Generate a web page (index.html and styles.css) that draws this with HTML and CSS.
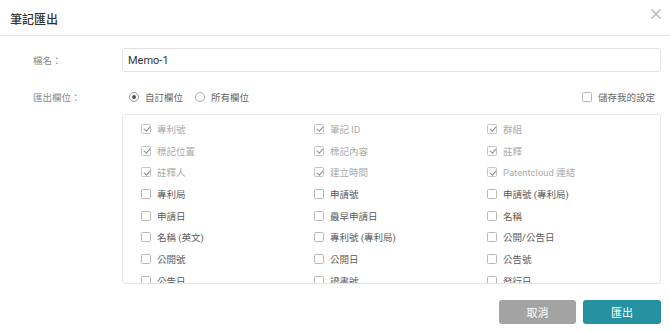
FILE: index.html
```html
<!DOCTYPE html>
<html>
<head>
    <meta charset="UTF-8">
    <title>筆記匯出</title>
    <link rel="stylesheet" href="styles.css">
</head>
<body>
    <div class="modal">
        <div class="modal-header">
            <h4 class="modal-title">筆記匯出</h4>
            <button class="close-btn" type="button">
                <svg viewBox="0 0 10 10" fill="none" stroke="currentColor" stroke-width="1.4">
                    <path d="M0.5 0.5 L9.5 9.5 M9.5 0.5 L0.5 9.5"/>
                </svg>
            </button>
        </div>

        <div class="modal-body">
            <div class="form-row row-name">
                <label class="form-label">檔名：</label>
                <input class="form-input" type="text" value="Memo-1">
            </div>

            <div class="form-row row-fields">
                <label class="form-label">匯出欄位：</label>
                <div class="field-options">
                    <span class="radio-opt"><span class="radio checked"></span>自訂欄位</span>
                    <span class="radio-opt"><span class="radio"></span>所有欄位</span>
                    <span class="save-opt"><span class="check"></span>儲存我的設定</span>
                </div>
            </div>

            <div class="form-row row-list">
                <span class="form-label"></span>
                <div class="field-list">
                    <div class="field-grid">
                        <span class="item disabled"><span class="check on"></span>專利號</span>
                        <span class="item disabled"><span class="check on"></span>筆記 ID</span>
                        <span class="item disabled"><span class="check on"></span>群組</span>

                        <span class="item disabled"><span class="check on"></span>標記位置</span>
                        <span class="item disabled"><span class="check on"></span>標記內容</span>
                        <span class="item disabled"><span class="check on"></span>註釋</span>

                        <span class="item disabled"><span class="check on"></span>註釋人</span>
                        <span class="item disabled"><span class="check on"></span>建立時間</span>
                        <span class="item disabled"><span class="check on"></span>Patentcloud 連結</span>

                        <span class="item"><span class="check"></span>專利局</span>
                        <span class="item"><span class="check"></span>申請號</span>
                        <span class="item"><span class="check"></span>申請號 (專利局)</span>

                        <span class="item"><span class="check"></span>申請日</span>
                        <span class="item"><span class="check"></span>最早申請日</span>
                        <span class="item"><span class="check"></span>名稱</span>

                        <span class="item"><span class="check"></span>名稱 (英文)</span>
                        <span class="item"><span class="check"></span>專利號 (專利局)</span>
                        <span class="item"><span class="check"></span>公開/公告日</span>

                        <span class="item"><span class="check"></span>公開號</span>
                        <span class="item"><span class="check"></span>公開日</span>
                        <span class="item"><span class="check"></span>公告號</span>

                        <span class="item"><span class="check"></span>公告日</span>
                        <span class="item"><span class="check"></span>證書號</span>
                        <span class="item"><span class="check"></span>發行日</span>
                    </div>
                    <div class="scrollbar">
                        <span class="arrow up"></span>
                        <span class="thumb"></span>
                        <span class="arrow down"></span>
                    </div>
                </div>
            </div>
        </div>

        <div class="modal-footer">
            <button class="btn btn-cancel" type="button">取消</button>
            <button class="btn btn-primary" type="button">匯出</button>
        </div>
    </div>
</body>
</html>
```

FILE: styles.css
```css
* {
    margin: 0;
    padding: 0;
    box-sizing: border-box;
}

body {
    width: 670px;
    height: 332px;
    overflow: hidden;
    background: #fff;
    font-family: Roboto, "Noto Sans CJK TC", sans-serif;
    color: #555;
}

/* Header */
.modal-header {
    height: 36px;
    padding: 0 9px 0 10px;
    display: flex;
    align-items: center;
    justify-content: space-between;
    border-bottom: 1px solid #e6e6e6;
}

.modal-title {
    font-size: 12px;
    font-weight: 500;
    color: #333;
    padding-top: 1px;
}

.close-btn {
    width: 10px;
    height: 10px;
    border: none;
    background: none;
    color: #b5b5b5;
    margin-top: -7px;
}

.close-btn svg {
    display: block;
    width: 10px;
    height: 10px;
}

/* Body */
.modal-body {
    padding: 0 9px 0 33px;
}

.form-row {
    display: flex;
    align-items: center;
}

.form-label {
    width: 89px;
    flex-shrink: 0;
    font-size: 9.5px;
    color: #8a8a8a;
}

.row-name {
    margin-top: 12px;
}

.form-input {
    flex: 1;
    height: 24px;
    border: 1px solid #e3e3e3;
    border-radius: 3px;
    padding: 0 5px;
    font-family: Roboto, sans-serif;
    font-size: 11px;
    color: #333;
    outline: none;
}

.row-fields {
    margin-top: 16px;
    height: 18px;
}

.field-options {
    flex: 1;
    display: flex;
    align-items: center;
    font-size: 9.5px;
    color: #666;
}

.radio-opt {
    display: flex;
    align-items: center;
    gap: 6px;
    margin-left: 7px;
    margin-right: 5px;
}

.radio {
    width: 10px;
    height: 10px;
    border: 1px solid #b0b0b0;
    border-radius: 50%;
    display: flex;
    align-items: center;
    justify-content: center;
}

.radio.checked {
    border-color: #999;
}

.radio.checked::after {
    content: '';
    width: 4px;
    height: 4px;
    border-radius: 50%;
    background: #555;
}

.save-opt {
    margin-left: auto;
    display: flex;
    align-items: center;
    gap: 6px;
    margin-right: 6px;
}

/* Checkbox */
.check {
    width: 10px;
    height: 10px;
    flex-shrink: 0;
    border: 1px solid #b8b8b8;
    border-radius: 1.5px;
    position: relative;
    background: #fff;
}

.check.on::after {
    content: '';
    position: absolute;
    left: 2.5px;
    top: 0.5px;
    width: 2.5px;
    height: 5px;
    border-right: 1.2px solid #8c8c8c;
    border-bottom: 1.2px solid #8c8c8c;
    transform: rotate(40deg);
}

/* Field list */
.row-list {
    margin-top: 8px;
}

.field-list {
    flex: 1;
    height: 170px;
    border: 1px solid #e6e6e6;
    border-radius: 3px;
    display: flex;
    overflow: hidden;
}

.field-grid {
    flex: 1;
    display: grid;
    grid-template-columns: 173px 173px 173px;
    grid-auto-rows: 21.7px;
    padding: 3px 0 0 18px;
    font-size: 9.5px;
    color: #5a5a5a;
}

.item {
    display: flex;
    align-items: center;
    gap: 6px;
    white-space: nowrap;
}

.item.disabled {
    color: #aaa;
}

.item.disabled .check {
    border-color: #c4c4c4;
}

.scrollbar {
    width: 12px;
    display: flex;
    flex-direction: column;
    align-items: center;
    padding: 7px 0 6px;
}

.arrow {
    width: 0;
    height: 0;
    border-left: 2.5px solid transparent;
    border-right: 2.5px solid transparent;
}

.arrow.up {
    border-bottom: 3px solid #ccc;
}

.arrow.down {
    margin-top: auto;
    border-top: 3px solid #ccc;
}

.thumb {
    width: 5px;
    height: 45px;
    margin-top: 5px;
    border-radius: 3px;
    background: #a9d7e6;
}

/* Footer */
.modal-footer {
    display: flex;
    justify-content: flex-end;
    gap: 7px;
    padding-right: 9px;
    margin-top: 16px;
}

.btn {
    height: 24px;
    width: 77px;
    border: none;
    border-radius: 3px;
    color: #fff;
    font-family: Roboto, "Noto Sans CJK TC", sans-serif;
    font-size: 11px;
}

.btn-cancel {
    background: #a3a3a3;
}

.btn-primary {
    width: 78px;
    background: #2592a2;
}
```
